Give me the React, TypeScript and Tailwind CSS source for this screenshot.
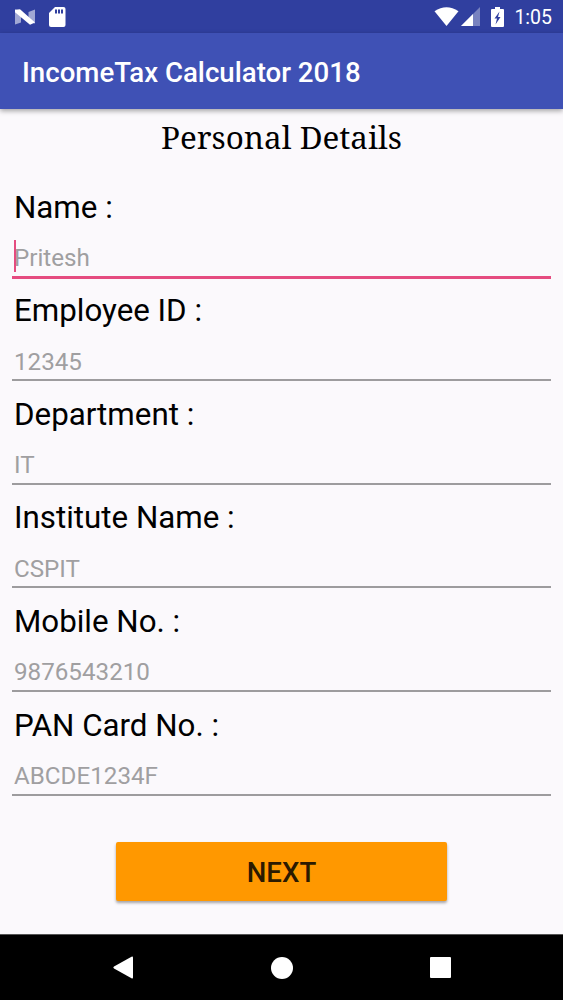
const fields = [
  { id: "name", label: "Name :", hint: "Pritesh", active: true },
  { id: "employee", label: "Employee ID :", hint: "12345" },
  { id: "department", label: "Department :", hint: "IT" },
  { id: "institute", label: "Institute Name :", hint: "CSPIT" },
  { id: "mobile", label: "Mobile No. :", hint: "9876543210" },
  { id: "pan", label: "PAN Card No. :", hint: "ABCDE1234F" },
]

type FieldProps = {
  id: string
  label: string
  hint: string
  active?: boolean
}

function StatusBar() {
  return (
    <div className="flex h-[33px] shrink-0 items-center bg-[#303f9f] pl-[14px] pr-[11px] text-white">
      <svg className="h-4 w-[22px]" viewBox="0 0 22 16" fill="currentColor">
        <path opacity=".55" d="M1 .5 7 2v11.500L1 15.500zM14.500 3 21 .5v14L14.500 13z" />
        <path d="M1 .8 6 .2 21 13.500l-5 2.300L1 3.200z" />
      </svg>
      <svg className="ml-[13px] h-5 w-[17px]" viewBox="0 0 17 20">
        <path fill="white" d="M6 0h8.500a2 2 0 0 1 2 2v16a2 2 0 0 1-2 2h-12.500a2 2 0 0 1-2-2V6z" />
        <path fill="#303f9f" d="M6 2.500h2v4H6zM9 2.500h2v4H9zM12 2.500h2v4h-2z" />
      </svg>
      <div className="ml-auto flex items-center">
        <svg className="h-[19px] w-[25px]" viewBox="0 0 25 19" fill="currentColor">
          <path d="M.5 4.300Q12.500-4 24.500 4.300L12.500 19z" />
        </svg>
        <svg className="ml-[2px] h-[19px] w-[19px]" viewBox="0 0 19 19" fill="currentColor">
          <path opacity=".35" d="M19 0v19H0z" />
          <path d="M12 7v12H0z" />
        </svg>
        <svg className="ml-[11px] h-5 w-[13px]" viewBox="0 0 13 20">
          <path fill="white" d="M4 0h5v2h3q1 0 1 1v16q0 1-1 1H1q-1 0-1-1V3q0-1 1-1h3z" />
          <path fill="#303f9f" d="M8.500 4.500 3.500 11.500h2.500l-1.500 6 5-7.500H7z" />
        </svg>
        <span className="ml-[10px] mt-[1px] text-[19.5px] leading-[33px]">1:05</span>
      </div>
    </div>
  )
}

function Field({ id, label, hint, active }: FieldProps) {
  return (
    <div className="h-[103.6px] px-3">
      <label htmlFor={id} className="block h-9 pl-[2px] text-[31.3px] leading-9 text-black">
        {label}
      </label>
      <div className="relative mt-[11px]">
        <input
          id={id}
          placeholder={hint}
          className={
            active
              ? "block h-[42px] w-full border-b-3 border-[#e54c80] bg-transparent pl-[2px] pt-[3px] text-[24.2px] outline-none placeholder:text-[#a09fa1]"
              : "block h-[41px] w-full border-b-2 border-[#9d9c9e] bg-transparent pl-[2px] pt-[4px] text-[24.2px] outline-none placeholder:text-[#a09fa1]"
          }
        />
        {active && <span className="absolute left-[1.5px] top-[3px] h-8 w-[2.5px] bg-[#e54c80]" />}
      </div>
    </div>
  )
}

function NavBar() {
  return (
    <div className="flex h-[66px] shrink-0 items-center justify-between border-t border-[#555] bg-black px-[112px] text-white">
      <svg className="h-[23px] w-[21px]" viewBox="0 0 21 23" fill="currentColor">
        <path d="M19.500.700Q21 0 21 1.700v19.600q0 1.700-1.500 1L2 12.500q-1.500-1 0-2z" />
      </svg>
      <span className="h-[22px] w-[22px] rounded-full bg-white" />
      <span className="h-[21px] w-[21px] rounded-[1px] bg-white" />
    </div>
  )
}

export default function App() {
  return (
    <div className="flex h-[1000px] w-[563px] flex-col overflow-hidden bg-[#fbf9fc] font-[Roboto,sans-serif]">
      <StatusBar />
      <header className="flex h-[76px] shrink-0 items-center bg-[#3f51b5] pl-[22px] pt-[3px] shadow-[0_2px_5px_rgba(0,0,0,0.35)]">
        <h1 className="text-[27.65px] font-medium text-white">IncomeTax Calculator 2018</h1>
      </header>

      <main className="flex flex-1 flex-col">
        <h2 className="h-[80.6px] pt-[8px] text-center font-['Noto_Serif',serif] text-[31.4px] leading-[40px] text-black">
          Personal Details
        </h2>
        <form>
          {fields.map((field) => (
            <Field key={field.id} {...field} />
          ))}
        </form>
        <button className="mx-auto mt-[30.8px] h-[59px] w-[331px] rounded-[2px] bg-[#ff9800] pt-[2px] text-[27.6px] font-medium text-[#2b1a00] shadow-[0_2px_3px_rgba(0,0,0,0.35)]">
          NEXT
        </button>
      </main>
      <NavBar />
    </div>
  )
}
